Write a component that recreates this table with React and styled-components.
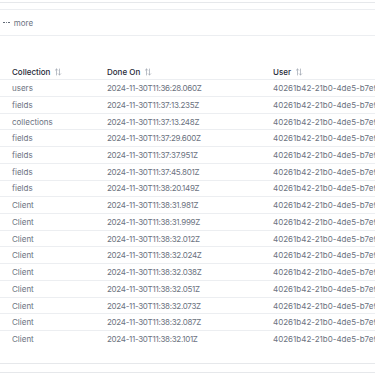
import React from "react";
import styled, { createGlobalStyle } from "styled-components";

const Global = createGlobalStyle`
  html, body { margin: 0; padding: 0; background: #fff; }
  body { font-family: "Inter", "Noto Sans", sans-serif; overflow: hidden; width: 375px; height: 375px; }
`;

const Page = styled.div`
  width: 375px;
  height: 375px;
  overflow: hidden;
  display: flex;
  flex-direction: column;
`;

const TopEdge = styled.div`
  height: 2px;
  flex: none;
  border-bottom: 1px solid #e6e8eb;
`;

const MoreBar = styled.div`
  flex: none;
  margin-top: 6px;
  height: 25px;
  border-top: 1px solid #eceef1;
  border-bottom: 1px solid #eceef1;
  display: flex;
  align-items: center;
  gap: 4px;
  padding-left: 3px;
  font-size: 8px;
  color: #6b7280;
`;

const Dots = styled.span`
  display: flex;
  gap: 1px;
  & > i {
    width: 1.6px;
    height: 1.6px;
    border-radius: 50%;
    background: #4b5563;
  }
`;

const Table = styled.div`
  flex: none;
  margin-top: 28px;
  width: 460px;
  display: flex;
  flex-direction: column;
  font-size: 8px;
`;

const Row = styled.div`
  display: grid;
  grid-template-columns: 95px 166px 199px;
  height: ${(p) => (p.$head ? "16.3px" : "16.73px")};
  align-items: center;
  box-sizing: border-box;
  border-bottom: ${(p) => (p.$last ? "none" : "1px solid #eceef1")};
`;

const HeadCell = styled.div`
  padding-left: 12px;
  font-weight: 500;
  color: #1f2937;
  white-space: nowrap;
  display: flex;
  align-items: center;
  gap: 4px;
`;

const Cell = styled.div`
  padding-left: 12px;
  color: #6b7280;
  white-space: nowrap;
  overflow: hidden;
  letter-spacing: ${(p) => (p.$tight ? "-0.3px" : "0")};
`;

const Footer = styled.div`
  flex: none;
  margin-top: 15px;
  height: 8px;
  border-top: 1px solid #e6e8eb;
  border-bottom: 1px solid #e6e8eb;
`;

function SortIcon() {
  return (
    <svg width="8" height="8" viewBox="0 0 16 16" fill="none" stroke="#9ca3af" strokeWidth="1.4" strokeLinecap="round" strokeLinejoin="round">
      <path d="M5 14V2M2.5 4.5L5 2l2.5 2.5" />
      <path d="M11 2v12M8.5 11.5L11 14l2.5-2.5" />
    </svg>
  );
}

const rows = [
  ["users", "2024-11-30T11:36:28.060Z"],
  ["fields", "2024-11-30T11:37:13.235Z"],
  ["collections", "2024-11-30T11:37:13.248Z"],
  ["fields", "2024-11-30T11:37:29.600Z"],
  ["fields", "2024-11-30T11:37:37.951Z"],
  ["fields", "2024-11-30T11:37:45.801Z"],
  ["fields", "2024-11-30T11:38:20.149Z"],
  ["Client", "2024-11-30T11:38:31.981Z"],
  ["Client", "2024-11-30T11:38:31.999Z"],
  ["Client", "2024-11-30T11:38:32.012Z"],
  ["Client", "2024-11-30T11:38:32.024Z"],
  ["Client", "2024-11-30T11:38:32.038Z"],
  ["Client", "2024-11-30T11:38:32.051Z"],
  ["Client", "2024-11-30T11:38:32.073Z"],
  ["Client", "2024-11-30T11:38:32.087Z"],
  ["Client", "2024-11-30T11:38:32.101Z"],
];

const user = "40261b42-21b0-4de5-b7e9-a1c3";

export default function App() {
  return (
    <Page>
      <Global />
      <TopEdge />
      <MoreBar>
        <Dots><i /><i /><i /></Dots>
        <span>more</span>
      </MoreBar>
      <Table>
        <Row $head>
          <HeadCell>Collection<SortIcon /></HeadCell>
          <HeadCell>Done On<SortIcon /></HeadCell>
          <HeadCell>User<SortIcon /></HeadCell>
        </Row>
        {rows.map((r, i) => (
          <Row key={i} $last={i === rows.length - 1}>
            <Cell>{r[0]}</Cell>
            <Cell $tight>{r[1]}</Cell>
            <Cell>{user}</Cell>
          </Row>
        ))}
      </Table>
      <Footer />
    </Page>
  );
}
